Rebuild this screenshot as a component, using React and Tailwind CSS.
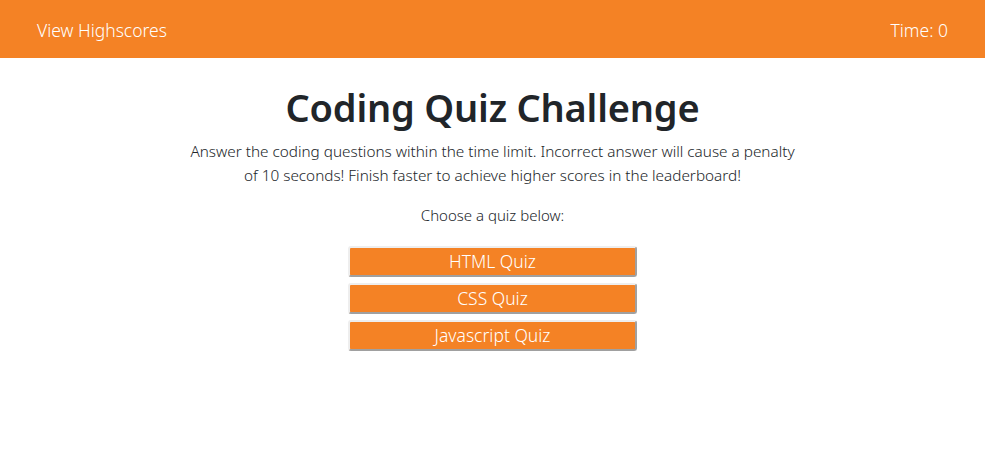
export default function App() {
  const QUIZZES = ['HTML Quiz', 'CSS Quiz', 'Javascript Quiz']

  return (
    <div className="min-h-[450px] bg-white text-[#212529] font-['Noto_Sans','Open_Sans',sans-serif] font-light">
      {/* header */}
      <header className="h-[58px] bg-[#f48225] flex items-center justify-between px-[37px] pt-[3px] text-white text-[17.5px]">
        <a className="cursor-pointer">View Highscores</a>
        <span>Time: 0</span>
      </header>

      <main className="flex flex-col items-center pt-[27px]">
        <h1 className="text-[38px] font-semibold leading-[1.2] tracking-[-0.2px]">Coding Quiz Challenge</h1>
        <p className="mt-[8px] w-[608px] text-center text-[15.3px] leading-6">
          Answer the coding questions within the time limit. Incorrect answer will cause a penalty of 10 seconds! Finish faster to achieve higher scores in the leaderboard!
        </p>
        <p className="mt-[16px] text-[15px] leading-6">Choose a quiz below:</p>

        <div className="mt-[19px] flex flex-col gap-[6px]">
          {QUIZZES.map(q => (
            <button
              key={q}
              className="w-[289px] h-[31px] pt-[2px] bg-[#f48225] text-white text-[17.5px] font-light leading-none border-2 border-t-[#eeeeee] border-l-[#eeeeee] border-b-[#a0a0a0] border-r-[#a0a0a0] rounded-[3px] cursor-pointer"
            >
              {q}
            </button>
          ))}
        </div>
      </main>
    </div>
  )
}
